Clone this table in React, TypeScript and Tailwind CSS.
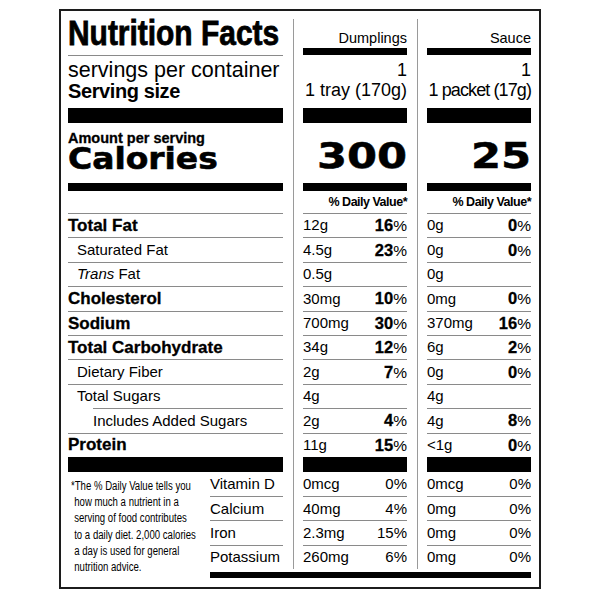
import React from "react";

type Cell = [string, string | null];

type Row = {
  label: React.ReactNode;
  bold?: boolean;
  indent?: 0 | 1 | 2;
  d: Cell;
  s: Cell;
};

const rows: Row[] = [
  { label: "Total Fat", bold: true, d: ["12g", "16"], s: ["0g", "0"] },
  { label: "Saturated Fat", indent: 1, d: ["4.5g", "23"], s: ["0g", "0"] },
  {
    label: (
      <>
        <i>Trans</i> Fat
      </>
    ),
    indent: 1,
    d: ["0.5g", null],
    s: ["0g", null],
  },
  { label: "Cholesterol", bold: true, d: ["30mg", "10"], s: ["0mg", "0"] },
  { label: "Sodium", bold: true, d: ["700mg", "30"], s: ["370mg", "16"] },
  { label: "Total Carbohydrate", bold: true, d: ["34g", "12"], s: ["6g", "2"] },
  { label: "Dietary Fiber", indent: 1, d: ["2g", "7"], s: ["0g", "0"] },
  { label: "Total Sugars", indent: 1, d: ["4g", null], s: ["4g", null] },
  { label: "Includes Added Sugars", indent: 2, d: ["2g", "4"], s: ["4g", "8"] },
  { label: "Protein", bold: true, d: ["11g", "15"], s: ["<1g", "0"] },
];

// name, dumplings amount, dumplings %, sauce amount, sauce %
const vitamins = [
  ["Vitamin D", "0mcg", "0%", "0mcg", "0%"],
  ["Calcium", "40mg", "4%", "0mg", "0%"],
  ["Iron", "2.3mg", "15%", "0mg", "0%"],
  ["Potassium", "260mg", "6%", "0mg", "0%"],
];

function LabelColumn() {
  return (
    <div className="w-[215px] shrink-0">
      <h1 className="w-max origin-left scale-x-[0.855] whitespace-nowrap text-[35px] font-bold leading-[28px] [-webkit-text-stroke:0.8px_#000]">
        Nutrition Facts
      </h1>
      <div className="mt-[8px] h-px bg-[#8a8a8a]" />
      <p className="mt-[4px] whitespace-nowrap text-[21.5px] leading-[21px]">
        servings per container
      </p>
      <p className="text-[20px] font-bold leading-[20px] tracking-[-0.02em]">
        Serving size
      </p>
      <div className="mt-[7px] h-[15px] bg-black" />
      <p className="mt-[9px] whitespace-nowrap text-[14.5px] font-bold leading-[13px] [-webkit-text-stroke:0.3px_#000]">
        Amount per serving
      </p>
      <p className="mt-[1px] w-max origin-left scale-x-[1.08] font-['DejaVu_Sans',sans-serif] text-[30.5px] font-bold leading-[26px] [-webkit-text-stroke:0.6px_#000]">
        Calories
      </p>
      <div className="mt-[11px] h-[8px] bg-black" />
      <div className="h-[22px]" />

      {rows.map((r, i) => (
        <div
          key={i}
          className={
            r.indent === 2
              ? "ml-[25px] flex h-[24.4px] items-center border-t border-[#8a8a8a]"
              : "flex h-[24.4px] items-center border-t border-[#8a8a8a]"
          }
        >
          {r.bold ? (
            <span className="text-[17px] font-bold [-webkit-text-stroke:0.3px_#000]">
              {r.label}
            </span>
          ) : (
            <span
              className={
                r.indent === 1 ? "pl-[9px] text-[15px]" : "text-[15px]"
              }
            >
              {r.label}
            </span>
          )}
        </div>
      ))}

      <div className="h-[15px] bg-black" />

      <div className="flex h-[97px]">
        <div className="w-[142px] shrink-0 pl-[3px] pt-[6px]">
          <p className="w-max origin-left scale-x-[0.8] whitespace-nowrap pl-[4px] -indent-[4px] text-[12px] leading-[16.2px]">
            *The % Daily Value tells you
            <br />
            how much a nutrient in a
            <br />
            serving of food contributes
            <br />
            to a daily diet. 2,000 calories
            <br />
            a day is used for general
            <br />
            nutrition advice.
          </p>
        </div>
        <div className="w-[73px]">
          {vitamins.map((v, i) => (
            <div
              key={v[0]}
              className={
                i === 0
                  ? "flex h-[24.25px] items-center text-[15px]"
                  : "flex h-[24.25px] items-center border-t border-[#8a8a8a] text-[15px]"
              }
            >
              {v[0]}
            </div>
          ))}
        </div>
      </div>
    </div>
  );
}

function Percent({ value }: { value: string | null }) {
  if (value === null) return null;
  return (
    <span>
      <b className="text-[16.5px] font-bold [-webkit-text-stroke:0.3px_#000]">
        {value}
      </b>
      <span className="text-[15.5px]">%</span>
    </span>
  );
}

function ValueColumn({
  name,
  size,
  calories,
  which,
  tight,
}: {
  name: string;
  size: string;
  calories: string;
  which: "d" | "s";
  tight?: boolean;
}) {
  return (
    <div className="ml-[10px] w-[114px] shrink-0 border-l border-[#9a9a9a] pl-[9px]">
      <p className="mt-[12px] text-right text-[14.5px] leading-[15px]">{name}</p>
      <div className="mt-[2px] h-[7px] bg-black" />
      <div className="mt-[5px] text-right text-[18px] leading-[20px]">
        <p>1</p>
        <p className={tight ? "whitespace-nowrap tracking-[-0.05em]" : "whitespace-nowrap"}>
          {size}
        </p>
      </div>
      <div className="mt-[8px] h-[15px] bg-black" />
      <div className="mt-[18px] flex justify-end">
        <p className="origin-right scale-x-[1.2] font-['DejaVu_Sans',sans-serif] text-[36px] font-bold leading-[30px] [-webkit-text-stroke:0.5px_#000]">
          {calories}
        </p>
      </div>
      <div className="mt-[12px] h-[8px] bg-black" />
      <div className="flex h-[22px] items-center justify-end text-[12.5px] font-bold tracking-[-0.04em]">
        % Daily Value*
      </div>

      {rows.map((r, i) => {
        const cell = r[which];
        return (
          <div
            key={i}
            className="flex h-[24.4px] items-center justify-between border-t border-[#8a8a8a]"
          >
            <span className="text-[15px]">{cell[0]}</span>
            <Percent value={cell[1]} />
          </div>
        );
      })}

      <div className="h-[15px] bg-black" />

      {vitamins.map((v, i) => (
        <div
          key={v[0]}
          className={
            i === 0
              ? "flex h-[24.25px] items-center justify-between text-[15px]"
              : "flex h-[24.25px] items-center justify-between border-t border-[#8a8a8a] text-[15px]"
          }
        >
          <span>{which === "d" ? v[1] : v[3]}</span>
          <span>{which === "d" ? v[2] : v[4]}</span>
        </div>
      ))}
    </div>
  );
}

export default function App() {
  return (
    <div className="h-[600px] w-[600px] bg-white pt-[9px] font-['Liberation_Sans',Arial,sans-serif] text-black">
      <div className="mx-auto w-[482px] border-2 border-[#1c1c1c] pb-[9px] pl-[7px] pr-[8px] pt-[8px]">
        <div className="flex">
          <LabelColumn />
          <ValueColumn name="Dumplings" size="1 tray (170g)" calories="300" which="d" />
          <ValueColumn
            name="Sauce"
            size="1 packet (17g)"
            calories="25"
            which="s"
            tight
          />
        </div>
        <div className="ml-[142px] mt-[3px] h-[6px] bg-black" />
      </div>
    </div>
  );
}
